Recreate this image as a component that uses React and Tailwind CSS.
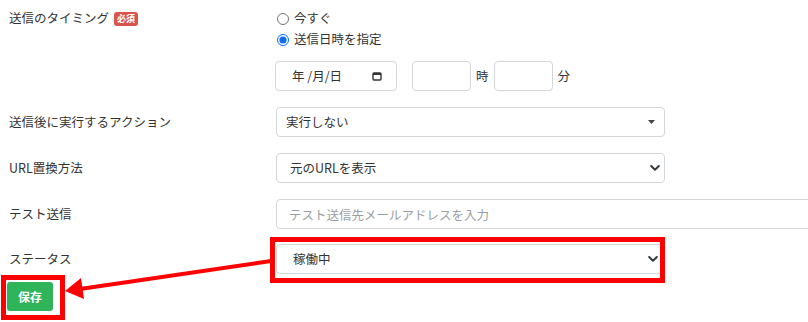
import React from 'react';

const font = "font-['Noto_Sans_CJK_JP','Noto_Sans',sans-serif]";
const boxBase = 'h-[30px] rounded-[4px] border border-[#d4d7da] bg-white text-[12.5px] text-[#333] outline-none';

const Chevron = () => (
  <svg className="pointer-events-none absolute right-[5px] top-1/2 -translate-y-1/2" width="10" height="7" viewBox="0 0 10 7">
    <path d="M1.2 1.5 5 5.2 8.8 1.5" fill="none" stroke="#343a40" strokeWidth="2" strokeLinecap="round" strokeLinejoin="round" />
  </svg>
);

const Label = ({ children }) => (
  <div className="w-[276px] shrink-0 pl-[9px] text-[12.5px] text-[#333]">{children}</div>
);

const App = () => {
  return (
    <div className={`relative w-[808px] h-[322px] overflow-hidden bg-white ${font}`}>
      <div className="flex flex-col pt-[8px]">
        {/* timing */}
        <div className="flex">
          <div className="w-[276px] shrink-0 pl-[9px] h-[21px] flex items-center gap-[5px] text-[12.5px] text-[#333]">
            <span>送信のタイミング</span>
            <span className="rounded-[3px] bg-[#d9534f] px-[3px] h-[14px] leading-[14px] text-[9px] font-bold text-white">必須</span>
          </div>
          <div className="flex flex-col">
            <label className="h-[21px] flex items-center gap-[5px] text-[12.5px] text-[#333]">
              <input type="radio" name="timing" className="m-0 ml-[1px] w-[12px] h-[12px]" />
              <span>今すぐ</span>
            </label>
            <label className="h-[21px] flex items-center gap-[5px] text-[12.5px] text-[#333]">
              <input type="radio" name="timing" defaultChecked className="m-0 ml-[1px] w-[12px] h-[12px] accent-[#0b6cf0]" />
              <span>送信日時を指定</span>
            </label>
            <div className="mt-[11px] flex items-center">
              <div className={`${boxBase} w-[122px] -ml-[1px] flex items-center justify-between pl-[16px] pr-[14px]`}>
                <span>年 /月/日</span>
                <svg width="10" height="9" viewBox="0 0 10 9">
                  <rect x="1" y="1" width="8" height="7" rx="1" fill="none" stroke="#333" strokeWidth="1.4" />
                  <rect x="1" y="1" width="8" height="2" fill="#333" />
                </svg>
              </div>
              <input type="text" className={`${boxBase} w-[59px] ml-[15px] px-2`} />
              <span className="mx-[5px] text-[12.5px] text-[#333]">時</span>
              <input type="text" className={`${boxBase} w-[59px] px-2`} />
              <span className="ml-[5px] text-[12.5px] text-[#333]">分</span>
            </div>
          </div>
        </div>

        {/* action after send */}
        <div className="mt-[16px] flex items-center">
          <Label>送信後に実行するアクション</Label>
          <div className={`${boxBase} relative w-[389px] flex items-center pl-[9px]`}>
            <span>実行しない</span>
            <svg className="absolute right-[9px] top-1/2 -translate-y-1/2" width="7" height="4" viewBox="0 0 7 4">
              <path d="M0 0h7L3.5 4z" fill="#444" />
            </svg>
          </div>
        </div>

        {/* url replace */}
        <div className="mt-[16px] flex items-center">
          <Label>URL置換方法</Label>
          <div className="relative w-[389px]">
            <select className={`${boxBase} w-full appearance-none pl-[13px]`} defaultValue="orig">
              <option value="orig">元のURLを表示</option>
            </select>
            <Chevron />
          </div>
        </div>

        {/* test send */}
        <div className="mt-[16px] flex items-center">
          <Label>テスト送信</Label>
          <input
            type="text"
            placeholder="テスト送信先メールアドレスを入力"
            className={`${boxBase} w-[560px] shrink-0 pl-[12px] placeholder:text-[#9a9ea3]`}
          />
        </div>

        {/* status */}
        <div className="mt-[15px] flex items-center">
          <Label>ステータス</Label>
          <div className="relative w-[387px]">
            <select className={`${boxBase} w-full appearance-none pl-[16px]`} defaultValue="active">
              <option value="active">稼働中</option>
            </select>
            <Chevron />
          </div>
        </div>

        <div className="mt-[8px] pl-[7px]">
          <button type="button" className="w-[46px] h-[29px] rounded-[3px] bg-[#2fb45a] text-[12px] font-bold text-white">
            保存
          </button>
        </div>
      </div>

      {/* annotations */}
      <div className="absolute left-[270px] top-[237px] w-[395px] h-[46px] border-[5px] border-[#ff0000]" />
      <div className="absolute left-[1px] top-[275px] w-[64px] h-[45px] border-[5px] border-[#ff0000]" />
      <svg className="absolute left-0 top-0 pointer-events-none" width="808" height="322" viewBox="0 0 808 322">
        <line x1="271" y1="261" x2="80" y2="289" stroke="#ff0000" strokeWidth="4" />
        <polygon points="65,291 81,278 84,299" fill="#ff0000" />
      </svg>
    </div>
  );
};

export default App;
